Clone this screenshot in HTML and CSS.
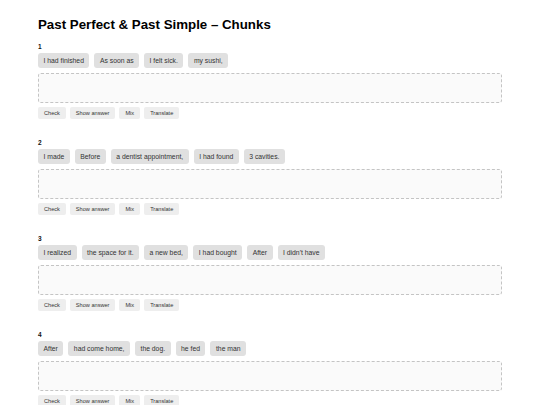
FILE: index.html
```html
<!DOCTYPE html>
<html>
<head>
<meta charset="utf-8">
<link rel="stylesheet" href="styles.css">
</head>
<body>
<main class="page">
  <h1 class="title">Past Perfect &amp; Past Simple – Chunks</h1>

  <section class="exercise">
    <div class="num">1</div>
    <div class="chips">
      <span class="chip">I had finished</span>
      <span class="chip">As soon as</span>
      <span class="chip">I felt sick.</span>
      <span class="chip">my sushi,</span>
    </div>
    <div class="drop"></div>
    <div class="actions">
      <button class="btn">Check</button>
      <button class="btn">Show answer</button>
      <button class="btn">Mix</button>
      <button class="btn">Translate</button>
    </div>
  </section>

  <section class="exercise">
    <div class="num">2</div>
    <div class="chips">
      <span class="chip">I made</span>
      <span class="chip">Before</span>
      <span class="chip">a dentist appointment,</span>
      <span class="chip">I had found</span>
      <span class="chip">3 cavities.</span>
    </div>
    <div class="drop"></div>
    <div class="actions">
      <button class="btn">Check</button>
      <button class="btn">Show answer</button>
      <button class="btn">Mix</button>
      <button class="btn">Translate</button>
    </div>
  </section>

  <section class="exercise">
    <div class="num">3</div>
    <div class="chips">
      <span class="chip">I realized</span>
      <span class="chip">the space for it.</span>
      <span class="chip">a new bed,</span>
      <span class="chip">I had bought</span>
      <span class="chip">After</span>
      <span class="chip">I didn't have</span>
    </div>
    <div class="drop"></div>
    <div class="actions">
      <button class="btn">Check</button>
      <button class="btn">Show answer</button>
      <button class="btn">Mix</button>
      <button class="btn">Translate</button>
    </div>
  </section>

  <section class="exercise">
    <div class="num">4</div>
    <div class="chips">
      <span class="chip">After</span>
      <span class="chip">had come home,</span>
      <span class="chip">the dog.</span>
      <span class="chip">he fed</span>
      <span class="chip">the man</span>
    </div>
    <div class="drop"></div>
    <div class="actions">
      <button class="btn">Check</button>
      <button class="btn">Show answer</button>
      <button class="btn">Mix</button>
      <button class="btn">Translate</button>
    </div>
  </section>
</main>
</body>
</html>
```

FILE: styles.css
```css
html, body {
  margin: 0;
  padding: 0;
  background: #ffffff;
}

body {
  font-family: "Liberation Sans", Arial, sans-serif;
  color: #111;
}

.page {
  width: 464px;
  padding: 17px 0 0 38px;
}

.title {
  margin: 0 0 10px 0;
  font-size: 13.3px;
  line-height: 16px;
  font-weight: bold;
  color: #000;
}

.exercise {
  margin-bottom: 20px;
}

.num {
  font-size: 6.5px;
  font-weight: bold;
  line-height: 8px;
  height: 8px;
  margin-bottom: 2px;
}

.chips {
  display: flex;
  flex-wrap: wrap;
  gap: 5px;
  margin-bottom: 5px;
}

.chip {
  display: inline-block;
  background: #e0e0e0;
  color: #333;
  font-size: 6.8px;
  line-height: 15px;
  height: 15px;
  padding: 0 5.5px;
  border-radius: 3px;
}

.drop {
  height: 28px;
  border: 1px dashed #c4c4c4;
  border-radius: 3px;
  background: #fafafa;
  margin-bottom: 4px;
}

.actions {
  display: flex;
  gap: 4px;
}

.btn {
  font-family: "Liberation Sans", Arial, sans-serif;
  font-size: 5.6px;
  line-height: 12px;
  height: 12px;
  padding: 0 6px;
  border: none;
  border-radius: 2px;
  background: #eeeeee;
  color: #333;
}
```
